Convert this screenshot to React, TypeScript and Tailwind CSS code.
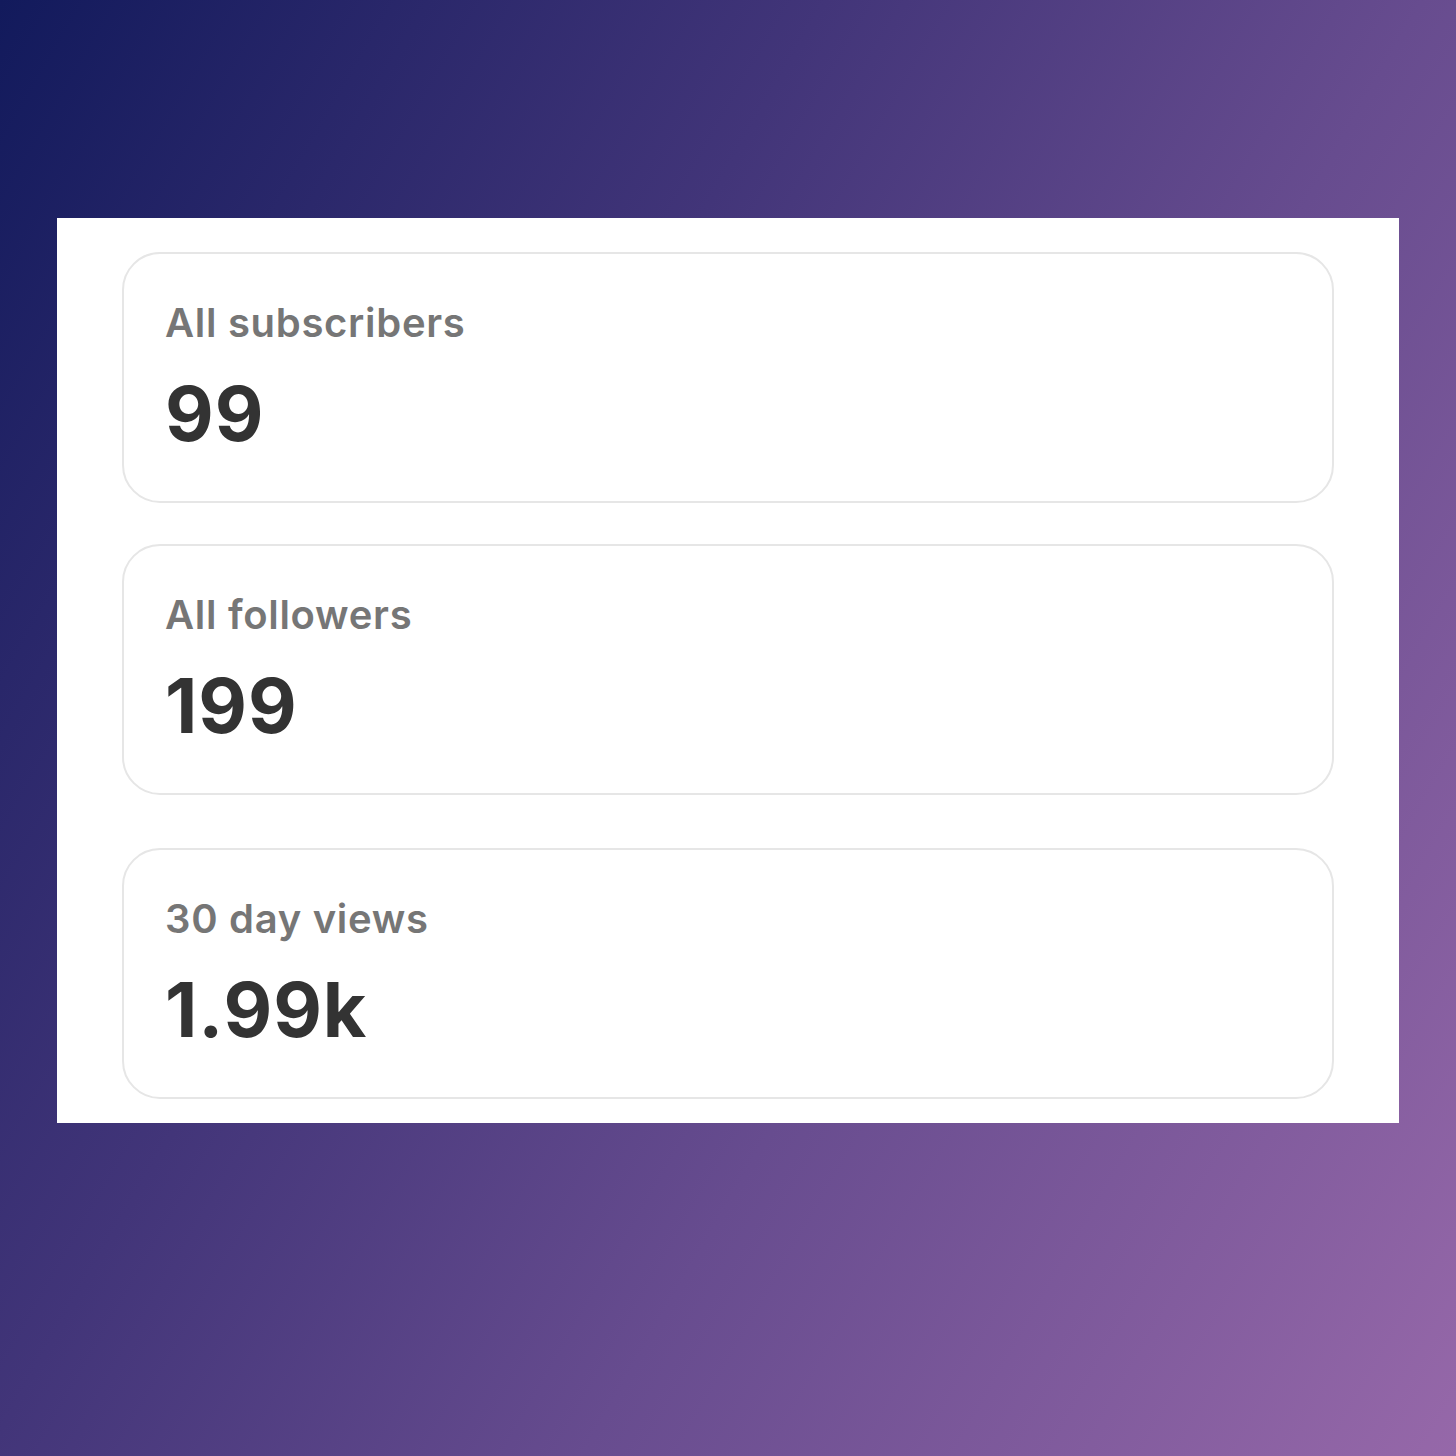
const stats = [
  { label: 'All subscribers', value: '99', gap: 'mt-[34px]' },
  { label: 'All followers', value: '199', gap: 'mt-[41px]' },
  { label: '30 day views', value: '1.99k', gap: 'mt-[53px]' },
];

function StatCard({ label, value, gap }: { label: string; value: string; gap: string }) {
  return (
    <div
      className={`${gap} rounded-[38px] border-2 border-[#e6e6e6] bg-white pl-[41px] pt-[45px] pb-[47px]`}
    >
      <p className="text-[40px] leading-[48px] font-semibold text-[#767676] tracking-[0.7px]">{label}</p>
      <p className="mt-[27px] text-[75px] leading-[80px] font-bold text-[#333333] tracking-[1px]">
        {value}
      </p>
    </div>
  );
}

export default function App() {
  return (
    <div
      className="w-[1456px] h-[1456px] flex flex-col pt-[218px] px-[57px] bg-[linear-gradient(120deg,#121a5c_0%,#423579_36%,#674c8f_62%,#9668a9_100%)]"
      style={{ fontFamily: 'Inter, "Liberation Sans", sans-serif' }}
    >
      <div className="bg-white px-[65px] pb-[24px]">
        {stats.map((s) => (
          <StatCard key={s.label} {...s} />
        ))}
      </div>
    </div>
  );
}
